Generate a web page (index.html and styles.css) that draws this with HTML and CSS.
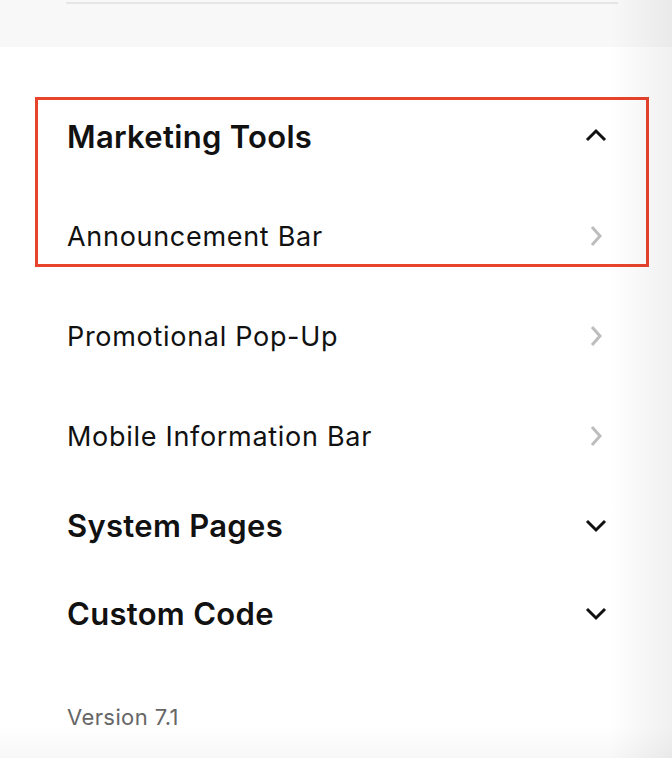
FILE: index.html
```html
<!DOCTYPE html>
<html lang="en">
<head>
    <meta charset="UTF-8">
    <meta name="viewport" content="width=device-width, initial-scale=1.0">
    <title>Design</title>
    <link rel="stylesheet" href="styles.css">
</head>
<body>
    <div class="panel">
        <div class="topband">
            <div class="topline"></div>
        </div>

        <div class="menu">
            <div class="section open">
                <div class="highlight"></div>
                <div class="section-head">
                    <span>Marketing Tools</span>
                    <svg class="chev" viewBox="0 0 24 24"><path d="M3 16 L12 7 L21 16"/></svg>
                </div>
                <div class="sub">
                    <div class="sub-row">
                        <span>Announcement Bar</span>
                        <svg class="arrow" viewBox="0 0 24 24"><path d="M8 3 L16 12 L8 21"/></svg>
                    </div>
                    <div class="sub-row">
                        <span>Promotional Pop-Up</span>
                        <svg class="arrow" viewBox="0 0 24 24"><path d="M8 3 L16 12 L8 21"/></svg>
                    </div>
                    <div class="sub-row">
                        <span>Mobile Information Bar</span>
                        <svg class="arrow" viewBox="0 0 24 24"><path d="M8 3 L16 12 L8 21"/></svg>
                    </div>
                </div>
            </div>

            <div class="section">
                <div class="section-head">
                    <span>System Pages</span>
                    <svg class="chev" viewBox="0 0 24 24"><path d="M3 8 L12 17 L21 8"/></svg>
                </div>
            </div>

            <div class="section">
                <div class="section-head">
                    <span>Custom Code</span>
                    <svg class="chev" viewBox="0 0 24 24"><path d="M3 8 L12 17 L21 8"/></svg>
                </div>
            </div>

            <div class="version">Version 7.1</div>
        </div>
    </div>
</body>
</html>
```

FILE: styles.css
```css
html, body {
    margin: 0;
    padding: 0;
    background-color: white;
    font-family: Inter, "Liberation Sans", sans-serif;
    color: #111;
}

.panel {
    position: relative;
    height: 758px;
    overflow: hidden;
}

/* soft shadow on the right and bottom edges */
.panel::after {
    content: "";
    position: absolute;
    inset: 0;
    pointer-events: none;
    background:
        linear-gradient(to right, rgba(0, 0, 0, 0) 610px, rgba(0, 0, 0, 0.06) 672px),
        linear-gradient(to bottom, rgba(0, 0, 0, 0) 725px, rgba(0, 0, 0, 0.03) 758px);
}

.topband {
    height: 47px;
    background-color: #f8f8f8;
    padding-top: 2px;
    box-sizing: border-box;
}

.topline {
    height: 2px;
    margin: 0 54px 0 66px;
    background-color: #e6e6e6;
}

.menu {
    padding: 45px 54px 0 67px;
}

.section {
    position: relative;
}

.highlight {
    position: absolute;
    top: 5px;
    left: -32px;
    right: -31px;
    height: 170px;
    border: 3px solid #e8432b;
    box-sizing: border-box;
}

.section-head {
    display: flex;
    justify-content: space-between;
    align-items: center;
    height: 88px;
    font-size: 31px;
    font-weight: 600;
    letter-spacing: 0.3px;
}

.open .section-head {
    margin-bottom: 6px;
}

.sub {
    margin-bottom: -5px;
}

.chev {
    width: 24px;
    height: 24px;
    margin-right: 10px;
    fill: none;
    stroke: #111;
    stroke-width: 3;
}

.sub-row {
    display: flex;
    justify-content: space-between;
    align-items: center;
    height: 100px;
    font-size: 27px;
    letter-spacing: 0.7px;
}

.arrow {
    width: 24px;
    height: 24px;
    margin-right: 10px;
    fill: none;
    stroke: #bdbdbd;
    stroke-width: 3;
}

.version {
    margin-top: 47px;
    font-size: 22px;
    letter-spacing: 0.4px;
    color: #666;
}
```
